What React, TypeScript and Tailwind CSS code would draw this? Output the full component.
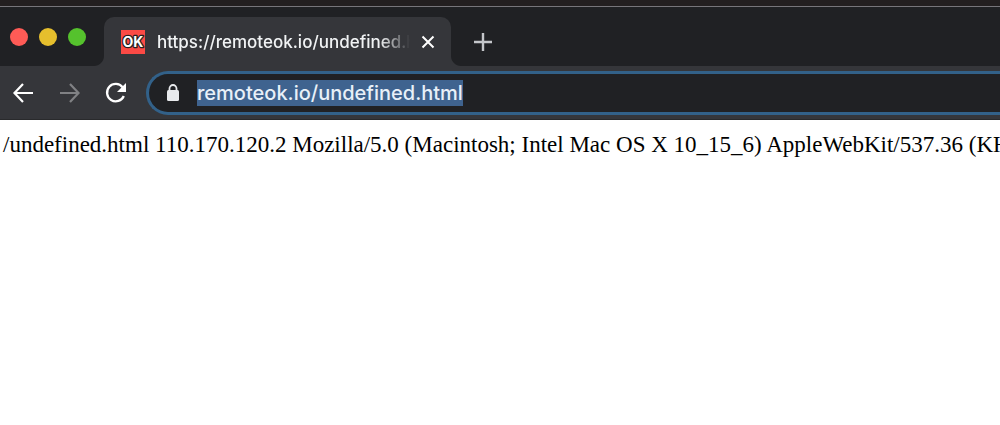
import { useEffect, useRef } from "react";

const USER_AGENT =
  "Mozilla/5.0 (Macintosh; Intel Mac OS X 10_15_6) AppleWebKit/537.36 (KHTML, like Gecko)";

function WindowControls() {
  return (
    <div className="flex h-10 shrink-0 items-center gap-[11px] pl-[10px]">
      <button aria-label="Close window" className="size-[18px] rounded-full bg-[#ff5b56]" />
      <button aria-label="Minimize window" className="size-[18px] rounded-full bg-[#e6bf2d]" />
      <button aria-label="Zoom window" className="size-[18px] rounded-full bg-[#55c22d]" />
    </div>
  );
}

// The curved foot where the active tab runs into the toolbar
function TabFoot({ flip = false }: { flip?: boolean }) {
  return (
    <svg
      viewBox="0 0 10 10"
      className={flip ? "size-[10px] shrink-0 -scale-x-100 self-end" : "size-[10px] shrink-0 self-end"}
      aria-hidden="true"
    >
      <path d="M10 0V10H0C5.500 10 10 5.500 10 0Z" fill="#35363a" />
    </svg>
  );
}

function Favicon() {
  return (
    <svg viewBox="0 0 24 24" className="size-6 shrink-0" aria-hidden="true">
      <rect width="24" height="24" fill="#fb4a45" />
      <text
        x="12"
        y="17"
        textAnchor="middle"
        fontSize="14"
        fontWeight="700"
        fontFamily="Inter, sans-serif"
        fill="#fff"
        stroke="#252020"
        strokeWidth="2.400"
        strokeLinejoin="round"
        paintOrder="stroke"
      >
        OK
      </text>
    </svg>
  );
}

function TabStrip() {
  return (
    <div className="flex h-[59px] bg-[#202124] pt-[10px]">
      <WindowControls />
      <div className="flex min-w-0 pl-[8px]">
        <TabFoot />
        <div className="flex h-[49px] w-[347px] items-center rounded-t-[10px] bg-[#35363a] pr-[15px] pl-[17px]">
          <Favicon />
          <span className="ml-3 min-w-0 flex-1 overflow-hidden mask-r-from-88% mask-r-to-100% text-[17px] leading-7 font-medium whitespace-nowrap text-[#f1f3f4]">
            https://remoteok.io/undefined.html
          </span>
          <button aria-label="Close tab" className="ml-[10px] flex size-4 items-center justify-center">
            <svg viewBox="0 0 16 16" className="size-4" fill="none" stroke="#fff" strokeWidth="2">
              <path d="M2.500 2.500L13.500 13.500M13.500 2.500L2.500 13.500" />
            </svg>
          </button>
        </div>
        <TabFoot flip />
      </div>
      <button aria-label="New tab" className="ml-3 flex h-[49px] w-5 items-center justify-center">
        <svg viewBox="0 0 18 18" className="size-[18px]" fill="none" stroke="#c4c6ca" strokeWidth="2.400">
          <path d="M9 0V18M0 9H18" />
        </svg>
      </button>
    </div>
  );
}

function Toolbar() {
  const address = useRef<HTMLInputElement>(null);

  useEffect(() => {
    address.current?.focus();
    address.current?.select();
  }, []);

  return (
    <div className="flex items-center border-b border-[#292a2c] bg-[#35363a] pt-[5px] pb-1 pl-3">
      <div className="flex shrink-0 gap-6">
        <button aria-label="Back">
          <svg viewBox="0 0 22 22" className="size-[22px]" fill="none" stroke="#fff" strokeWidth="2.200">
            <path d="M21 11H3M11 2L2.500 11L11 20" />
          </svg>
        </button>
        <button aria-label="Forward" disabled>
          <svg viewBox="0 0 22 22" className="size-[22px]" fill="none" stroke="#808184" strokeWidth="2.200">
            <path d="M2 11H20M12 2L20.500 11L12 20" />
          </svg>
        </button>
        <button aria-label="Reload">
          <svg viewBox="0 0 22 22" className="size-[22px]" fill="none">
            <path d="M18.600 5.200A8.700 8.700 0 1 0 19.800 14" stroke="#fff" strokeWidth="2.300" />
            <path d="M22 1V10H13Z" fill="#fff" />
          </svg>
        </button>
      </div>
      <div className="ml-5 flex h-11 min-w-0 flex-1 items-center rounded-l-full border-[3px] border-r-0 border-[#326189] bg-[#202124] pl-[17px]">
        <svg viewBox="0 0 14 18" className="h-[18px] w-[14px] shrink-0" aria-hidden="true">
          <path d="M3.500 8V4.500A3.500 3.500 0 0 1 10.500 4.500V8" fill="none" stroke="#e8eaed" strokeWidth="1.800" />
          <rect x="1" y="6" width="12" height="11" rx="1.500" fill="#e8eaed" />
        </svg>
        <input
          ref={address}
          type="text"
          aria-label="Address"
          defaultValue="remoteok.io/undefined.html"
          spellCheck={false}
          className="ml-[17px] min-w-0 flex-1 bg-transparent text-xl leading-[26px] font-medium text-[#e8f0f8] outline-none selection:bg-[#3f638f] selection:text-[#e8f0f8]"
        />
      </div>
    </div>
  );
}

export default function App() {
  return (
    <div className="min-h-screen overflow-hidden bg-white">
      <header className="border-t-[6px] border-[#231f20] font-['Inter',sans-serif]">
        <div className="h-px bg-[#77757a]" />
        <TabStrip />
        <Toolbar />
      </header>
      <main className="px-[3px] py-[11px] font-['Liberation_Serif',serif] text-[23px] leading-7 whitespace-nowrap text-black">
        <p>/undefined.html 110.170.120.2 {USER_AGENT}</p>
      </main>
    </div>
  );
}
